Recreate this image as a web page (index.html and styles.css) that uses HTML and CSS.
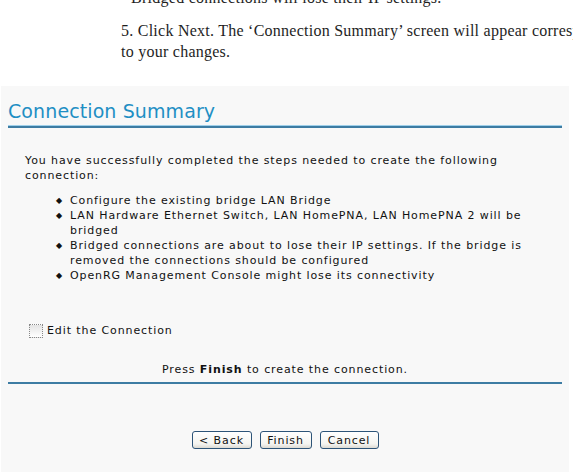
FILE: index.html
```html
<!DOCTYPE HTML>
<html>
<head>
<meta name="viewport" content="width=device-width, initial-scale=1">
<link rel="stylesheet" href="styles.css">
</head>
<body>

<div class="doc">
	<p class="cut">&bull; Bridged connections will lose their IP settings.</p>
	<p>5. Click Next. The &lsquo;Connection Summary&rsquo; screen will appear corresponding<br>to your changes.</p>
</div>

<div class="panel">
	<h1 class="title">Connection Summary</h1>

	<div class="summary">
		<p class="intro">You have successfully completed the steps needed to create the following connection:</p>
		<ul class="steps">
			<li>Configure the existing bridge LAN Bridge</li>
			<li>LAN Hardware Ethernet Switch, LAN HomePNA, LAN HomePNA 2 will be bridged</li>
			<li>Bridged connections are about to lose their IP settings. If the bridge is removed the connections should be configured</li>
			<li>OpenRG Management Console might lose its connectivity</li>
		</ul>
	</div>

	<label class="edit"><span class="box"></span>Edit the Connection</label>

	<p class="press">Press <b>Finish</b> to create the connection.</p>

	<div class="buttonBox">
		<button class="btn back">&lt; Back</button>
		<button class="btn finish">Finish</button>
		<button class="btn cancel">Cancel</button>
	</div>
</div>

</body>
</html>
```

FILE: styles.css
```css
body {
	background-color: #ffffff;
	margin: 0px;
	overflow: hidden;
}

div.doc {
	padding-left: 121px;
	font-family: "Liberation Serif", serif;
	font-size: 16px;
	letter-spacing: 0.25px;
	line-height: 21px;
	color: #1e1e1e;
	white-space: nowrap;
	height: 86px;
	overflow: hidden;
}
div.doc p {
	margin: 0px;
	margin-bottom: 12px;
}
div.doc p.cut {
	margin-top: -13px;
}

div.panel {
	background-color: #f8f8f8;
	margin: 0px 4px 0px 1px;
	padding: 14px 7px 0px 7px;
	height: 386px;
	box-sizing: border-box;
	font-family: "DejaVu Sans", Verdana, sans-serif;
	font-size: 11px;
	letter-spacing: 0.9px;
	color: #111;
}

h1.title {
	margin: 0px;
	font-size: 19px;
	font-weight: normal;
	letter-spacing: 0.1px;
	color: #1f8fc4;
	line-height: 22px;
	padding-bottom: 4px;
	border-bottom: 2px solid #3d7ca3;
	box-shadow: inset 0 -1px 0 #9fd0ea;
}

div.summary {
	padding: 25px 0px 0px 17px;
	width: 515px;
	line-height: 15px;
}
p.intro {
	margin: 0px;
}
ul.steps {
	margin: 10px 0px 0px 0px;
	padding-left: 45px;
	list-style: none;
}
ul.steps li {
	position: relative;
}
ul.steps li:before {
	content: "\25C6";
	position: absolute;
	left: -14px;
	font-size: 8px;
}

label.edit {
	display: flex;
	align-items: center;
	height: 15px;
	margin: 40px 0px 0px 21px;
}
span.box {
	display: inline-block;
	width: 12px;
	height: 12px;
	border: 1px dotted #888;
	background: linear-gradient(#e4e4e4, #ffffff);
	margin-right: 4px;
}

p.press {
	margin: 24px 0px 0px 0px;
	line-height: 15px;
	text-align: center;
	padding-bottom: 5px;
	border-bottom: 2px solid #3d7ca3;
}

div.buttonBox {
	margin-top: 47px;
	display: flex;
	justify-content: center;
	gap: 8px;
}
.btn {
	font-family: "DejaVu Sans", Verdana, sans-serif;
	font-size: 11px;
	letter-spacing: 0.9px;
	color: #111;
	height: 18px;
	padding: 0px;
	border: 1px solid #2d5478;
	border-radius: 3px;
	background: linear-gradient(#ffffff, #f4f4f0 75%, #dcdad2);
}
.back { width: 60px; }
.finish { width: 52px; }
.cancel { width: 59px; }
```
